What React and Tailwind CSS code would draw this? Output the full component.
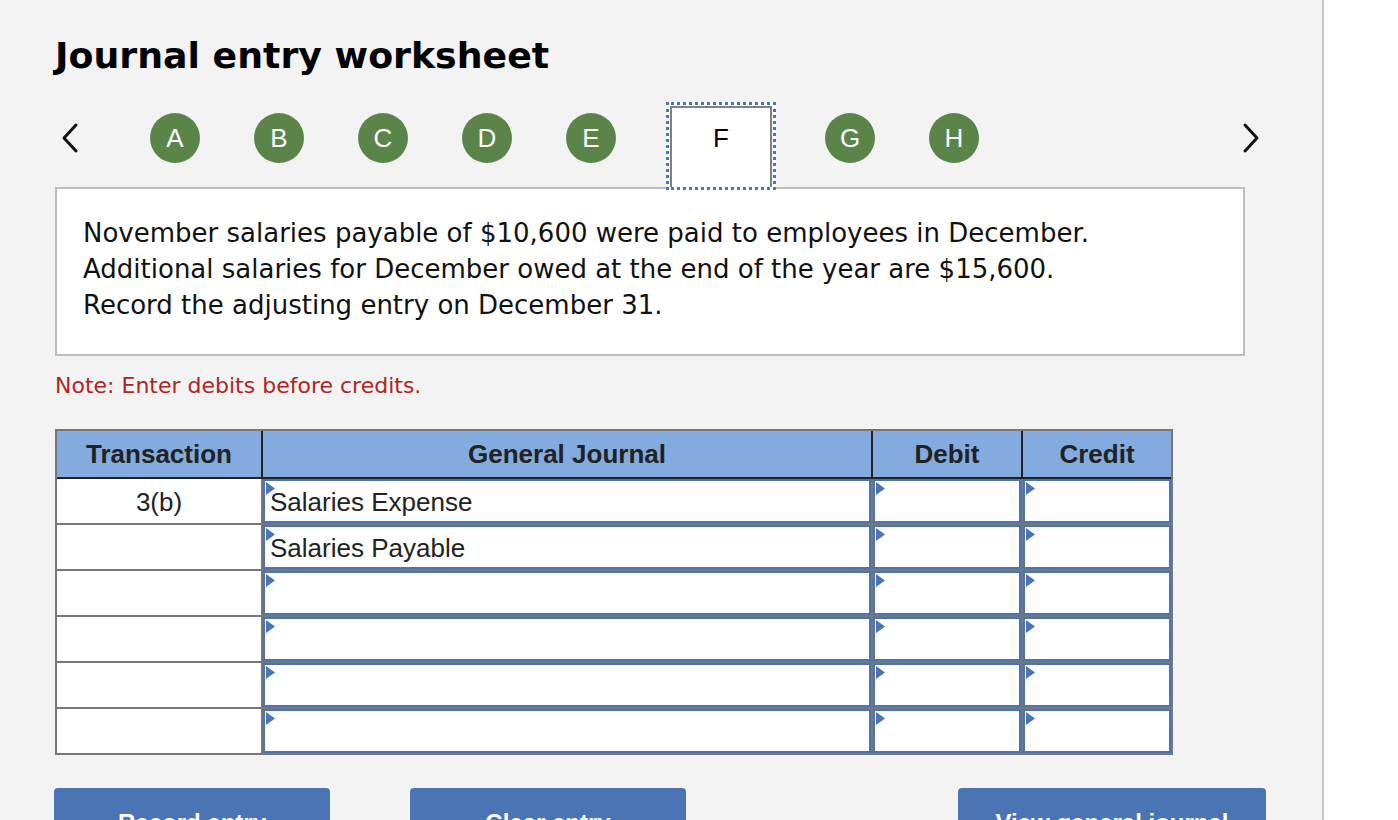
import React from "react";

const ARIAL = { fontFamily: '"Liberation Sans", Arial, sans-serif' };

function Tri() {
  return (
    <svg className="absolute left-[1px] top-[1px]" width="10" height="13" viewBox="0 0 10 13">
      <polygon points="0,0 9,6.5 0,13" fill="#4a74b4" />
    </svg>
  );
}

function InputCell({ text }) {
  return (
    <div className="relative bg-white border-2 border-[#4a74b4] flex items-center pl-[5px] pt-[2px] text-[26px] text-[#222]" style={ARIAL}>
      <Tri />
      {text}
    </div>
  );
}

function Circle({ l }) {
  return (
    <div className="w-[50px] h-[50px] rounded-full bg-[#5a8448] text-white flex items-center justify-center text-[26px]" style={ARIAL}>
      {l}
    </div>
  );
}

export default function App() {
  const rows = [
    { t: "3(b)", g: "Salaries Expense" },
    { t: "", g: "Salaries Payable" },
    { t: "", g: "" },
    { t: "", g: "" },
    { t: "", g: "" },
    { t: "", g: "" },
  ];
  return (
    <div className="flex w-[1398px] h-[820px] overflow-hidden bg-white">
      <div className="w-[1324px] h-[820px] bg-[#f3f3f3] border-r-2 border-[#c6c6c6] shrink-0 pl-[55px]" style={{ fontFamily: '"DejaVu Sans", Verdana, sans-serif' }}>
        <h1 className="pt-[34px] text-[36.3px] leading-[44px] font-bold text-black">Journal entry worksheet</h1>

        <div className="mt-[24px] flex items-start h-[85px] relative z-10">
          <div className="w-[32px] h-[72px] flex items-center justify-center ml-[-1px]">
            <svg width="18" height="32" viewBox="0 0 18 32">
              <polyline points="15,3 3,16 15,29" fill="none" stroke="#111" strokeWidth="3" strokeLinecap="round" strokeLinejoin="round" />
            </svg>
          </div>
          <div className="flex items-center h-[72px] ml-[64px] gap-[54px]">
            <Circle l="A" />
            <Circle l="B" />
            <Circle l="C" />
            <Circle l="D" />
            <Circle l="E" />
          </div>
          <div className="ml-[50px] bg-white border-[3px] border-dotted border-[#4a74b4] w-[110px] h-[88px] p-[1px] pb-0 shrink-0">
            <div className="w-full h-full bg-white border-2 border-b-0 border-[#808080] flex items-start justify-center pt-[15px] text-[26px] leading-[30px] text-black" style={ARIAL}>
              F
            </div>
          </div>
          <div className="flex items-center h-[72px] ml-[49px] gap-[54px]">
            <Circle l="G" />
            <Circle l="H" />
          </div>
          <div className="w-[32px] h-[72px] flex items-center justify-center ml-[256px]">
            <svg width="18" height="32" viewBox="0 0 18 32">
              <polyline points="3,3 15,16 3,29" fill="none" stroke="#111" strokeWidth="3" strokeLinecap="round" strokeLinejoin="round" />
            </svg>
          </div>
        </div>

        <div className="w-[1190px] h-[169px] bg-white border-2 border-[#bdbdbd] pt-[26px] pl-[26px] text-[26px] leading-[36px] text-[#111]">
          <p>November salaries payable of $10,600 were paid to employees in December.</p>
          <p>Additional salaries for December owed at the end of the year are $15,600.</p>
          <p>Record the adjusting entry on December 31.</p>
        </div>

        <p className="mt-[15px] text-[22px] leading-[30px] text-[#b0241f]">Note: Enter debits before credits.</p>

        <div className="mt-[28px] w-[1118px] border-2 border-[#777] bg-[#777]" style={ARIAL}>
          <div className="grid grid-cols-[204px_608px_148px_148px] gap-x-[2px] bg-[#222] border-b-2 border-[#222]">
            {["Transaction", "General Journal", "Debit", "Credit"].map((h) => (
              <div key={h} className="h-[46px] bg-[#83abe0] flex items-center justify-center font-bold text-[26px] text-[#222]">
                {h}
              </div>
            ))}
          </div>
          <div className="grid grid-cols-[204px_608px_148px_148px] gap-[2px] auto-rows-[44px]">
            {rows.map((r, i) => (
              <React.Fragment key={i}>
                <div className="bg-white flex items-center justify-center pt-[2px] text-[26px] text-[#222]">{r.t}</div>
                <InputCell text={r.g} />
                <InputCell text="" />
                <InputCell text="" />
              </React.Fragment>
            ))}
          </div>
        </div>

        <div className="mt-[33px] flex text-white font-bold text-[24px]" style={ARIAL}>
          <div className="ml-[-1px] w-[276px] h-[64px] pt-[6px] rounded-[4px] bg-[#4a74b4] flex items-center justify-center">Record entry</div>
          <div className="ml-[80px] w-[276px] h-[64px] pt-[6px] rounded-[4px] bg-[#4a74b4] flex items-center justify-center">Clear entry</div>
          <div className="ml-[272px] w-[308px] h-[64px] pt-[6px] rounded-[4px] bg-[#4a74b4] flex items-center justify-center">View general journal</div>
        </div>
      </div>
      <div className="flex-1 bg-white" />
    </div>
  );
}
